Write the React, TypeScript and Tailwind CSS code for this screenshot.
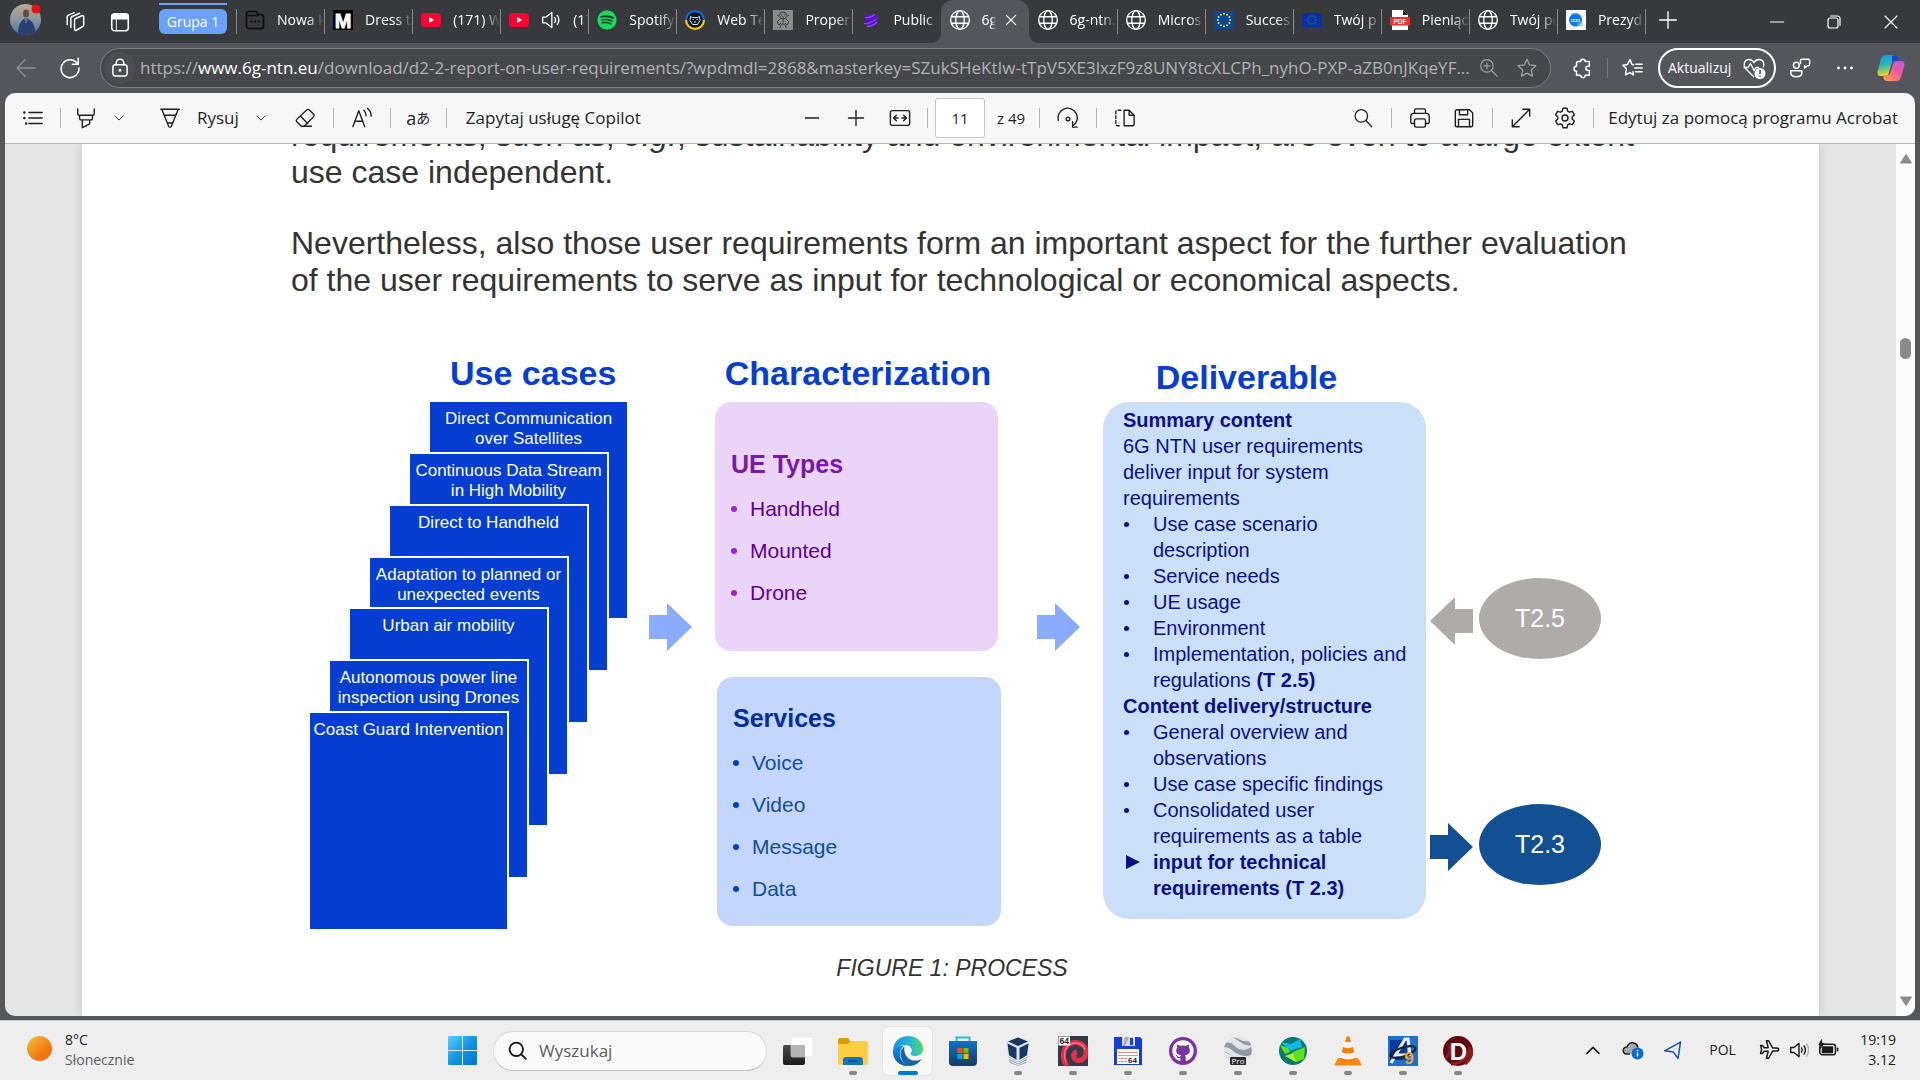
import React from "react";
import type { ReactNode } from "react";
import { FaGithub, FaSpotify } from "react-icons/fa";

const UI = "font-['Open_Sans','Noto_Sans',sans-serif]";
const ARIAL = "font-['Liberation_Sans',Arial,sans-serif]";

/* ---------- icon helpers ---------- */

function Line({ children, size = "size-6", w = 1.25 }: { children: ReactNode; size?: string; w?: number }) {
  return (
    <svg viewBox="0 0 24 24" className={`${size} shrink-0`} fill="none" stroke="currentColor" strokeWidth={w} strokeLinecap="round" strokeLinejoin="round" aria-hidden="true">
      {children}
    </svg>
  );
}

function Art({ children, size = "size-5", box = "0 0 20 20" }: { children: ReactNode; size?: string; box?: string }) {
  return (
    <svg viewBox={box} className={`${size} shrink-0`} aria-hidden="true">
      {children}
    </svg>
  );
}

const Globe = () => (
  <Line size="size-[22px]" w={1.5}>
    <circle cx="12" cy="12" r="10.2" />
    <ellipse cx="12" cy="12" rx="4.6" ry="10.2" />
    <path d="M2.800 8.500h18.400M2.800 15.500h18.400" />
  </Line>
);

const YouTube = () => (
  <Art>
    <rect x="0" y="3" width="20" height="14" rx="3.5" fill="#ff0033" />
    <path d="M8 7l5.2 3L8 13z" fill="#fff" />
  </Art>
);

const Chevron = () => (
  <Line size="size-[10px]" w={2.2}>
    <path d="M2 7l10 10L22 7" />
  </Line>
);

const euStars = Array.from({ length: 12 }, (_, i) => ({
  x: 10 + 6.2 * Math.sin((i * Math.PI) / 6),
  y: 10 - 6.2 * Math.cos((i * Math.PI) / 6),
}));

/* ---------- tab strip ---------- */

type Tab = { label: string; icon: ReactNode; extra?: ReactNode; active?: boolean };

const tabs: Tab[] = [
  {
    label: "Nowa k",
    icon: (
      <Art>
        <path d="M4 1.500h7l2.500 3H16a2.500 2.500 0 012.500 2.500v9a2.500 2.500 0 01-2.500 2.500H4A2.500 2.500 0 011.500 16V4A2.500 2.500 0 014 1.500z" fill="none" stroke="#0c0c0d" strokeWidth="1.700" />
        <path d="M2 5.500h12" stroke="#0c0c0d" strokeWidth="1.500" />
        <path d="M5.500 11.500h1.800M9.200 11.500H11M12.900 11.500h1.800" stroke="#0c0c0d" strokeWidth="1.800" />
      </Art>
    ),
  },
  {
    label: "Dress th",
    icon: (
      <Art>
        <rect width="20" height="20" fill="#000" />
        <text x="10" y="17.500" fontSize="20" fontWeight="900" textAnchor="middle" fill="#fff" stroke="#fff" strokeWidth=".8" fontFamily="Liberation Sans">M</text>
      </Art>
    ),
  },
  { label: "(171) W", icon: <YouTube /> },
  {
    label: "(17",
    icon: <YouTube />,
    extra: (
      <Line size="size-5" w={1.6}>
        <path d="M2 8.500h4L13 3v18l-7-5.500H2zM16.500 9c1.300 2 1.300 4 0 6M19.500 6.500c2.600 3.500 2.600 7.500 0 11" />
      </Line>
    ),
  },
  { label: "Spotify", icon: <FaSpotify className="size-5 shrink-0 rounded-full bg-[#1b3b25] text-[#1ed760]" /> },
  {
    label: "Web Te",
    icon: (
      <Art>
        <circle cx="10" cy="10" r="10" fill="#1668d8" />
        <path d="M0 10a10 10 0 0020 0z" fill="#f7c80a" />
        <circle cx="10" cy="10" r="7.800" fill="#0a1526" />
        <path d="M5.500 6.500l2 1h5l2-1 .5 4-2.500 4h-5L5 10.500z" fill="none" stroke="#dce6f2" strokeWidth="1" />
        <path d="M7.500 9.500h1M11.500 9.500h1M9 12h2" stroke="#dce6f2" strokeWidth="1" />
      </Art>
    ),
  },
  {
    label: "Proper",
    icon: (
      <Art>
        <rect width="20" height="20" fill="#8b8b8b" />
        <g fill="none" stroke="#3c3c3c" strokeWidth="1">
          <circle cx="10" cy="5.500" r="3.500" />
          <path d="M8 5h1M11 5h1M10 6v7M7 9l-3 3 2 3 2-2M13 9l3 3-2 3-2-2M7 18c0-3 1-4 3-4s3 1 3 4M4 5l2 1M16 5l-2 1" />
        </g>
      </Art>
    ),
  },
  {
    label: "Public",
    icon: (
      <Art>
        <ellipse cx="10.500" cy="10" rx="6.500" ry="6" fill="#5213e0" />
        <path d="M4 7.500c4 1 7-1 10-3.200M3 13.500c5 1 9-2 13-5.500M6 16.500c4 0 7-1.500 10-4.500" stroke="#b03bf5" strokeWidth="1.300" fill="none" />
        <path d="M1 12c6 1 12-2 17-6" stroke="#38393d" strokeWidth=".9" fill="none" />
      </Art>
    ),
  },
  { label: "6g", icon: <Globe />, active: true },
  { label: "6g-ntn.", icon: <Globe /> },
  { label: "Micros", icon: <Globe /> },
  {
    label: "Succes",
    icon: (
      <Art>
        <rect width="20" height="18" y="1" fill="#0b4596" />
        {euStars.map((s, i) => (
          <circle key={i} cx={s.x} cy={s.y} r="1" fill="#f5e623" />
        ))}
      </Art>
    ),
  },
  {
    label: "Twój p",
    icon: (
      <Art>
        <rect width="20" height="14" y="3" fill="#0832a0" />
        <circle cx="10" cy="10" r="4" fill="none" stroke="#6b7f68" strokeWidth="1" strokeDasharray="1 1.100" />
      </Art>
    ),
  },
  {
    label: "Pieniąd",
    icon: (
      <Art>
        <path d="M2 0h11l5 5v15H2z" fill="#fff" />
        <path d="M13 0l5 5h-5z" fill="#222" />
        <rect y="7" width="20" height="8.500" rx="1" fill="#f0302c" />
        <text x="10" y="13.500" fontSize="6.500" fontWeight="700" textAnchor="middle" fill="#fff" fontFamily="Liberation Sans">PDF</text>
      </Art>
    ),
  },
  { label: "Twój po", icon: <Globe /> },
  {
    label: "Prezyd",
    icon: (
      <Art>
        <rect width="20" height="20" fill="#fff" />
        <circle cx="9.500" cy="10" r="6.500" fill="#1273e6" />
        <path d="M5 10.500h9" stroke="#fff" strokeWidth="2.600" />
        <path d="M5.500 10.500h8" stroke="#1273e6" strokeWidth="1.400" strokeDasharray="2 .8" />
        <path d="M5 4.500c4-3 9-1 11 3M11 14l5-2v4z" stroke="#6eb0fb" fill="none" />
      </Art>
    ),
  },
];

function TabStrip() {
  return (
    <header className="flex h-[43px] shrink-0 items-stretch bg-[#38393d] text-white">
      <div className="flex items-center pl-[10px]">
        <button aria-label="Profil" className="mb-1 flex size-[31px] items-center">
          <svg viewBox="0 0 31 31" className="size-[31px] overflow-visible" aria-hidden="true">
            <defs>
              <linearGradient id="sky" x1="0" y1="0" x2="0" y2="1">
                <stop offset="0" stopColor="#b5aa8c" />
                <stop offset=".5" stopColor="#8a97a0" />
                <stop offset="1" stopColor="#4577a8" />
              </linearGradient>
              <clipPath id="round"><circle cx="15.500" cy="15.500" r="15.500" /></clipPath>
            </defs>
            <g clipPath="url(#round)">
              <rect width="31" height="31" fill="url(#sky)" />
              <ellipse cx="16" cy="9.500" rx="3" ry="4" fill="#6d4b40" />
              <path d="M8 31c0-9 2-15 8-17 6 2 9 7 10 17z" fill="#2c3f70" />
              <path d="M14 14l2 7 2-7z" fill="#5673a8" />
            </g>
            <circle cx="26" cy="5" r="4.500" fill="#e81010" />
          </svg>
        </button>
        <button aria-label="Obszary robocze" className="ml-5 flex w-7 justify-center">
          <Line size="size-[22px]" w={1.6}>
            <path d="M12 8.500l7.500-3.300c1.200-.5 2 .2 2 1.300v8.500c0 1-.4 1.600-1.300 2L13.500 21c-1.200.5-2-.2-2-1.300V9.500zM7.500 18V8c0-1 .4-1.600 1.300-2L17 2.500M3.500 15V6.500c0-1 .4-1.600 1.300-2L11 1.700" />
          </Line>
        </button>
        <button aria-label="Menu akcji kart" className="ml-[17px] flex w-7 justify-center">
          <Line size="size-[22px]" w={1.700}>
            <rect x="3" y="3" width="18" height="18.500" rx="3" />
            <path d="M3.500 4h17v4.500h-17z" fill="currentColor" />
            <path d="M8 9v12" strokeWidth="1" />
          </Line>
        </button>
      </div>
      <div className="ml-[25px] flex w-[68px] flex-col pt-[3px]">
        <div className="h-[2px] bg-[#6ba1f9]" />
        <button className="mt-1 flex h-[25px] items-center justify-center rounded-md bg-[#6ba1f9] text-sm">Grupa 1</button>
      </div>
      <nav className="ml-[9px] flex min-w-0 flex-[0_1_1410px] items-stretch" aria-label="Karty">
        {tabs.map((t, i) => {
          const noSep = t.active || tabs[i - 1]?.active;
          return (
            <div key={i} className={`flex min-w-0 flex-1 items-stretch ${t.active ? "relative rounded-t-xl bg-[#55565c]" : ""}`}>
              {t.active && (
                <>
                  <span className="absolute -left-[10px] bottom-0 size-[10px] bg-[radial-gradient(circle_at_0_0,#38393d_10px,#55565c_10px)]" />
                  <span className="absolute -right-[10px] bottom-0 size-[10px] bg-[radial-gradient(circle_at_100%_0,#38393d_10px,#55565c_10px)]" />
                </>
              )}
              <span className={`my-[9px] w-px shrink-0 self-stretch ${noSep ? "" : "bg-[#8a8b8f]"}`} />
              <button className="flex min-w-0 flex-1 items-center overflow-hidden pl-2 text-sm">
                <span className="mb-1 flex w-5 shrink-0 justify-center">{t.icon}</span>
                {t.extra && <span className="mb-1 ml-3 flex w-5 shrink-0">{t.extra}</span>}
                <span className={`mb-1 ml-3 min-w-0 overflow-hidden whitespace-nowrap text-left [mask-image:linear-gradient(to_right,black_65%,transparent)] ${t.active ? "w-[14px]" : "flex-1"}`}>
                  {t.label}
                </span>
              </button>
              {t.active && (
                <button aria-label="Zamknij kartę" className="mb-1 flex w-8 shrink-0 items-center justify-center pr-1">
                  <Line size="size-[14px]" w={2}><path d="M4 4l16 16M20 4L4 20" /></Line>
                </button>
              )}
            </div>
          );
        })}
        <span className="my-[9px] w-px shrink-0 bg-[#8a8b8f]" />
      </nav>
      <button aria-label="Nowa karta" className="mb-1 flex w-11 items-center justify-center">
        <Line size="size-5" w={1.600}><path d="M12 2v20M2 12h20" /></Line>
      </button>
      <div className="ml-auto flex">
        <button aria-label="Minimalizuj" className="flex w-[57px] items-center justify-center"><Line size="size-4" w={1.600}><path d="M2 12h20" /></Line></button>
        <button aria-label="Przywróć" className="flex w-[57px] items-center justify-center">
          <Line size="size-4" w={1.800}><rect x="3" y="6" width="15" height="15" rx="3" /><path d="M7 3h10a4 4 0 014 4v10" /></Line>
        </button>
        <button aria-label="Zamknij" className="flex w-[58px] items-center justify-center"><Line size="size-4" w={1.600}><path d="M3 3l18 18M21 3L3 21" /></Line></button>
      </div>
    </header>
  );
}

/* ---------- address bar ---------- */

function AddressBar() {
  return (
    <div className="flex h-[50px] shrink-0 items-center pl-1 pr-[5px] text-white">
      <button aria-label="Wstecz" className="flex w-11 justify-center text-[#8f9095]">
        <Line size="size-[22px]" w={1.400}><path d="M22 12H2.500M11 3l-8.800 9L11 21" /></Line>
      </button>
      <button aria-label="Odśwież" className="flex w-11 justify-center">
        <Line size="size-[22px]" w={1.700}><path d="M20.500 8A9.700 9.700 0 1021.700 12M21 1.500v6.500h-6.500" /></Line>
      </button>
      <div className="ml-2 flex h-10 min-w-0 flex-1 items-center rounded-full border border-[#7b7c80] bg-[#46474b] pl-[3px]">
        <button aria-label="Informacje o witrynie" className="flex size-8 shrink-0 items-center justify-center rounded-full bg-[#4c4d52]">
          <Line size="size-5" w={1.800}>
            <rect x="3.500" y="8" width="17" height="13.500" rx="3" /><path d="M7.500 8V6a4.500 4.500 0 019 0v2" /><circle cx="12" cy="14.700" r=".9" fill="currentColor" />
          </Line>
        </button>
        <div role="textbox" aria-label="Adres" className="ml-1 min-w-0 flex-1 overflow-hidden whitespace-nowrap text-[17px] text-[#b2b2b5]">
          https://<span className="text-white">www.6g-ntn.eu</span>/download/d2-2-report-on-user-requirements/?wpdmdl=2868&amp;masterkey=SZukSHeKtIw-tTpV5XE3lxzF9z8UNY8tcXLCPh_nyhO-PXP-aZB0nJKqeYF...
        </div>
        <button aria-label="Powiększ" className="flex w-9 shrink-0 justify-center text-[#a0a1a5]">
          <Line size="size-5" w={1.400}><circle cx="9.500" cy="9.500" r="7.500" /><path d="M15 15l7 7M9.500 6v7M6 9.500h7" /></Line>
        </button>
        <button aria-label="Dodaj do ulubionych" className="mr-[3px] flex w-10 shrink-0 justify-center text-[#a0a1a5]">
          <Line size="size-[22px]" w={1.400}><path d="M12 2.500l2.900 6.200 6.800.8-5 4.700 1.300 6.700L12 17.600l-6 3.300 1.300-6.700-5-4.700 6.800-.8z" /></Line>
        </button>
      </div>
      <button aria-label="Rozszerzenia" className="ml-[9px] flex w-11 justify-center">
        <Line size="size-[22px]" w={1.600}>
          <path d="M8 5h2.500a2.500 2.500 0 015 0H20v5h-1.500a2.300 2.300 0 000 4.600H20V20h-4.500a2.500 2.500 0 01-5 0H6v-4.500a2.700 2.700 0 010-5.400V7a2 2 0 012-2z" />
        </Line>
      </button>
      <span className="mx-[3px] h-5 w-px bg-[#77787d]" />
      <button aria-label="Ulubione" className="flex w-11 justify-center">
        <Line size="size-[22px]" w={1.600}>
          <path d="M12.500 8.500l-1.500-.3L8.700 2.800 6 8.200l-5 .8 3.800 3.800-1 6.700L8.700 17l3.800 2.500-.5-3.500M15 8h7M14 12h8M15 16h7" />
        </Line>
      </button>
      <button className="ml-[3px] flex h-10 w-[118px] items-center justify-between rounded-full border-2 border-white pl-2 pr-2 text-sm">
        Aktualizuj
        <svg viewBox="0 0 24 24" className="size-6 shrink-0" fill="none" stroke="currentColor" strokeWidth="1.300" aria-hidden="true">
          <path d="M12 21l-8.500-8.500C1 9.500 1.800 3.500 7 3.500c2.200 0 3.800 1 5 3 1.200-2 2.800-3 5-3 4.500 0 6 5 4.200 8M1.500 11.500H6l2.500-4 3.500 7 2-3h3" />
          <circle cx="18" cy="17.500" r="5.500" fill="#fff" stroke="none" />
          <path d="M18 14v4M18 19.500v1.300" stroke="#46474b" strokeWidth="1.500" />
        </svg>
      </button>
      <button aria-label="Czat" className="ml-[2px] flex w-11 justify-center">
        <Line size="size-[22px]" w={1.600}>
          <circle cx="8" cy="9" r="3.200" /><path d="M2 15h12v2.500c0 2.500-2.500 4-6 4s-6-1.500-6-4zM14.500 2.500H21a1.500 1.500 0 011.500 1.500v4A1.500 1.500 0 0121 9.500h-1l-3 2.500V9.500M12.500 7V4a1.500 1.500 0 012-1.500" />
        </Line>
      </button>
      <button aria-label="Ustawienia i więcej" className="ml-px flex w-11 justify-center">
        <Art box="0 0 20 20"><circle cx="3.500" cy="10" r="1.400" fill="#fff" /><circle cx="10" cy="10" r="1.400" fill="#fff" /><circle cx="16.500" cy="10" r="1.400" fill="#fff" /></Art>
      </button>
      <button aria-label="Copilot" className="flex w-12 justify-center">
        <svg viewBox="0 0 28 28" className="size-7" aria-hidden="true">
          <defs>
            <linearGradient id="cpa" x1="0" y1="0" x2=".2" y2="1"><stop offset="0" stopColor="#1d8ff0" /><stop offset=".5" stopColor="#25b9b3" /><stop offset="1" stopColor="#f3d629" /></linearGradient>
            <linearGradient id="cpb" x1="1" y1="0" x2=".2" y2="1"><stop offset="0" stopColor="#b658f0" /><stop offset=".5" stopColor="#ee5a9b" /><stop offset="1" stopColor="#ff9a4a" /></linearGradient>
          </defs>
          <path d="M9 1h9c2 0 3 1 3.500 3L22 7h-4c-2 0-3 1-3.600 3l-2.600 9c-.6 2-2 3-4 3H4c-3 0-4-2-3.300-5L4 5c1-3 2.500-4 5-4z" fill="url(#cpa)" />
          <path d="M18 1c2 0 3 1 3.500 3L22 7h-4c-2 0-3 1-3 2V3c0-1 1-2 3-2z" fill="#1746d1" />
          <path d="M19 27h-9c-2 0-3-1-3.500-3L6 21h4c2 0 3-1 3.600-3l2.600-8c.6-2 2-3 4-3H24c3 0 4 2 3.300 5L24 23c-1 3-2.500 4-5 4z" fill="url(#cpb)" />
        </svg>
      </button>
    </div>
  );
}

/* ---------- PDF toolbar ---------- */

const Sep = ({ className = "" }: { className?: string }) => <span className={`h-5 w-px shrink-0 bg-[#b5b5b5] ${className}`} />;

function Tool({ label, w = "w-11", children }: { label: string; w?: string; children: ReactNode }) {
  return <button aria-label={label} className={`flex h-9 shrink-0 items-center justify-center ${w}`}>{children}</button>;
}

function PdfToolbar() {
  return (
    <div className="flex h-[51px] shrink-0 items-center border-b border-[#b9b9b9] bg-[#f7f7f7] text-[17px] text-[#1f1f1f]">
      <div className="flex flex-1 items-center">
        <Tool label="Spis treści" w="w-[55px]">
          <Line size="size-[22px]" w={1.500}><path d="M7.500 6H22M7.500 12H22M7.500 18H22" /><path d="M2.500 6h.1M2.500 12h.1M4.500 18h.1" strokeWidth="2.600" /></Line>
        </Tool>
        <Sep />
        <Tool label="Wyróżnij" w="w-[50px]">
          <Line size="size-[22px]" w={1.500}><path d="M3 2v5.500a1.500 1.500 0 001.500 1.500h15A1.500 1.500 0 0021 7.500V2M5 9v3.500a1.500 1.500 0 001.500 1.500h11a1.500 1.500 0 001.500-1.500V9M8 14v8.500l8-4V14" /></Line>
        </Tool>
        <Tool label="Kolory wyróżnienia" w="w-4"><Chevron /></Tool>
        <button className="ml-4 flex h-9 items-center">
          <span className="flex w-[54px] justify-center">
            <Line size="size-[22px]" w={1.500}><path d="M2 2.500h20M3 2.500L10.500 21c.6 1.300 2.400 1.300 3 0L21 2.500M6 9h12M9.500 17.500h5" /></Line>
          </span>
          Rysuj
        </button>
        <Tool label="Opcje rysowania"><Chevron /></Tool>
        <Tool label="Wymaż">
          <Line size="size-[22px]" w={1.500}><path d="M13.500 3.500l-10.500 10a1.800 1.800 0 000 2.500l5 5h3l10.500-10.500a1.800 1.800 0 000-2.500l-5-5a2 2 0 00-3 .5zM7 10l8 8M8 21h11" /></Line>
        </Tool>
        <Sep className="ml-[6px]" />
        <Tool label="Czytaj na głos" w="w-14">
          <Line size="size-[22px]" w={1.500}><path d="M2 21.500L8.500 4 15 21.500M4.500 15.500h8M14 3.500c1.600 1.500 2.500 3.500 2.500 6M18 1.500c2.600 2 4 5 4 8.500" /></Line>
        </Tool>
        <Sep />
        <button aria-label="Przetłumacz" className="flex w-[55px] items-center justify-center font-['Open_Sans','Noto_Sans_CJK_JP',sans-serif] leading-6">
          <span className="text-lg leading-6">a</span><span className="text-sm leading-6">あ</span>
        </button>
        <Sep />
        <button className="pl-[19px]">Zapytaj usługę Copilot</button>
      </div>
      <div className="flex items-center pl-10">
        <Tool label="Pomniejsz"><Line size="size-5" w={1.600}><path d="M4 12h16" /></Line></Tool>
        <Tool label="Powiększ"><Line size="size-5" w={1.600}><path d="M12 3v18M3 12h18" /></Line></Tool>
        <Tool label="Dopasuj do szerokości">
          <Line size="size-[22px]" w={1.500}><rect x="1.500" y="4" width="21" height="16" rx="2" /><path d="M8 9l-3 3 3 3M5 12h5M16 9l3 3-3 3M19 12h-5" /></Line>
        </Tool>
        <Sep className="ml-[5px]" />
        <input aria-label="Numer strony" defaultValue="11" className="ml-[7px] h-10 w-[50px] rounded-[3px] border border-[#c6c6c6] bg-white text-center text-[15px]" />
        <span className="ml-3 w-[42px] text-[15px]">z 49</span>
        <Sep />
        <Tool label="Obróć" w="w-14">
          <Line size="size-[22px]" w={1.500}><path d="M1.500 14.500a10.500 10.500 0 1116 6M17 16v6h5" /><circle cx="12" cy="13" r="2" /></Line>
        </Tool>
        <Sep />
        <Tool label="Widok strony" w="w-14">
          <Line size="size-[22px]" w={1.500}><path d="M11 3.500v17h9a2 2 0 002-2V9l-5.500-5.500zM16.500 3.500V9H22" /><path d="M7.500 3.500H4a2 2 0 00-2 2v13a2 2 0 002 2h3.500" strokeDasharray="3 2.200" /></Line>
        </Tool>
      </div>
      <div className="flex flex-1 items-center justify-end pr-[17px]">
        <Tool label="Znajdź"><Line size="size-5" w={1.500}><circle cx="10" cy="9.500" r="7.500" /><path d="M15.500 15l7 7.500" /></Line></Tool>
        <Sep className="mx-[6px]" />
        <Tool label="Drukuj">
          <Line size="size-[22px]" w={1.500}><path d="M6 7V3.500A1.500 1.500 0 017.500 2h9A1.500 1.500 0 0118 3.500V7M6 18H3.500A1.500 1.500 0 012 16.500V10a3 3 0 013-3h14a3 3 0 013 3v6.500a1.500 1.500 0 01-1.500 1.500H18" /><rect x="6" y="13" width="12" height="9" rx="2" /></Line>
        </Tool>
        <Tool label="Zapisz">
          <Line size="size-[22px]" w={1.500}><path d="M4.500 3H18l3.500 3.500v13a2 2 0 01-2 2h-15a2 2 0 01-2-2V5a2 2 0 012-2zM7 3v5.500h9V3M6 21.500v-8h12v8" /></Line>
        </Tool>
        <Sep className="mx-[6px]" />
        <Tool label="Pełny ekran"><Line size="size-[22px]" w={1.500}><path d="M2.500 21.500l19-19M14 2.500h7.500V10M2.500 14v7.500H10" /></Line></Tool>
        <Tool label="Ustawienia">
          <Line size="size-6" w={1.400}>
            <path d="M10 2.200h4l.7 3 1.700 1 3-.9 2 3.500-2.200 2.200v2l2.200 2.200-2 3.500-3-.9-1.700 1-.7 3h-4l-.7-3-1.700-1-3 .9-2-3.500L4.800 13v-2L2.600 8.800l2-3.500 3 .9 1.700-1z" /><circle cx="12" cy="12" r="3" />
          </Line>
        </Tool>
        <Sep className="ml-[6px]" />
        <button className="ml-[14px] whitespace-nowrap">Edytuj za pomocą programu Acrobat</button>
      </div>
    </div>
  );
}

/* ---------- document ---------- */

const layers = [
  { text: "Direct Communication over Satellites", pos: "left-[120px] top-0" },
  { text: "Continuous Data Stream in High Mobility", pos: "left-[100px] top-[52px]" },
  { text: "Direct to Handheld", pos: "left-[80px] top-[104px]" },
  { text: "Adaptation to planned or unexpected events", pos: "left-[60px] top-[156px]" },
  { text: "Urban air mobility", pos: "left-[40px] top-[207px]" },
  { text: "Autonomous power line inspection using Drones", pos: "left-[20px] top-[259px]" },
  { text: "Coast Guard Intervention", pos: "left-0 top-[311px]" },
];

function Arrow({ color, className = "", flip = false }: { color: string; className?: string; flip?: boolean }) {
  return (
    <svg viewBox="0 0 43 48" className={`h-12 w-[43px] shrink-0 ${flip ? "-scale-x-100" : ""} ${className}`} aria-hidden="true">
      <path d="M0 12h18V0l25 24-25 24V36H0z" fill={color} />
    </svg>
  );
}

function Card({ title, items, tone }: { title: string; items: string[]; tone: { card: string; title: string; item: string; dot: string } }) {
  return (
    <section className={`flex h-[249px] flex-col rounded-2xl px-4 ${tone.card}`}>
      <h3 className={`text-[25px] leading-[30px] font-bold ${tone.title}`}>{title}</h3>
      <ul className={`mt-[9px] text-[21px] leading-[42px] ${tone.item}`}>
        {items.map((it) => (
          <li key={it} className="flex items-center">
            <span className={`mr-[13px] size-[6px] rounded-full ${tone.dot}`} />
            {it}
          </li>
        ))}
      </ul>
    </section>
  );
}

function Bullets({ items }: { items: ReactNode[] }) {
  return (
    <ul>
      {items.map((it, i) => (
        <li key={i} className="flex">
          <span className="flex h-[26px] w-[30px] shrink-0 items-center pl-px"><span className="size-[5px] rounded-full bg-current" /></span>
          <span>{it}</span>
        </li>
      ))}
    </ul>
  );
}

function Figure() {
  return (
    <figure className="mt-[51px]">
      <div className="flex text-[#053ed0]">
        <div className="w-[336px] shrink-0 pl-[19px] pt-1">
          <h2 className="h-[46px] pl-[140px] text-[34px] leading-[38px] font-bold whitespace-nowrap">Use cases</h2>
          <div className="relative h-[530px]">
            {layers.map((l) => (
              <div key={l.text} className={`absolute h-[218px] w-[199px] border-t-2 border-r-2 border-white bg-[#053ed0] pt-[7px] text-center text-[17px] leading-5 text-white ${l.pos}`}>
                {l.text}
              </div>
            ))}
          </div>
        </div>
        <Arrow color="#8aabff" className="mt-[253px] ml-[22px]" />
        <div className="ml-[23px] w-[286px] shrink-0 pt-1">
          <h2 className="h-12 text-center text-[34px] leading-[38px] font-bold">Characterization</h2>
          <div className="mr-[3px] [&>section]:pt-[47px]">
            <Card title="UE Types" items={["Handheld", "Mounted", "Drone"]} tone={{ card: "bg-[#ead5f8]", title: "text-[#7719aa]", item: "text-[#5c0096]", dot: "bg-[#9a22dd]" }} />
          </div>
          <div className="mt-[26px] ml-[2px] [&>section]:pt-[26px]">
            <Card title="Services" items={["Voice", "Video", "Message", "Data"]} tone={{ card: "bg-[#c4d5fe]", title: "text-[#002f9c]", item: "text-[#134f93]", dot: "bg-[#053ed0]" }} />
          </div>
        </div>
        <Arrow color="#8aabff" className="mt-[253px] ml-9" />
        <div className="ml-[23px] w-[323px] shrink-0 pt-2">
          <h2 className="h-11 pr-9 text-center text-[34px] leading-[38px] font-bold">Deliverable</h2>
          <div className="h-[517px] rounded-[26px] bg-[#cbdff8] pt-[5px] pr-4 pl-5 text-[20px] leading-[26px] text-[#0a1188]">
            <h3 className="font-bold">Summary content</h3>
            <p>6G NTN user requirements deliver input for system requirements</p>
            <Bullets items={["Use case scenario description", "Service needs", "UE usage", "Environment", <>Implementation, policies and regulations <b>(T 2.5)</b></>]} />
            <h3 className="font-bold">Content delivery/structure</h3>
            <Bullets items={["General overview and observations", "Use case specific findings", "Consolidated user requirements as a table"]} />
            <p className="flex font-bold">
              <span className="flex h-[26px] w-[30px] shrink-0 items-center pl-[3px]">
                <svg viewBox="0 0 14 14" className="size-[14px]" aria-hidden="true"><path d="M0 0l14 7-14 7z" fill="currentColor" /></svg>
              </span>
              <span>input for technical requirements (T 2.3)</span>
            </p>
          </div>
        </div>
        <div className="ml-1 flex shrink-0 flex-col gap-[145px] pt-[228px] text-[25px] text-white">
          <div className="flex items-center gap-[6px]">
            <Arrow color="#afabab" flip className="mt-1" />
            <span className="flex h-[81px] w-[122px] items-center justify-center rounded-[50%] bg-[#afabab]">T2.5</span>
          </div>
          <div className="flex items-center gap-[6px]">
            <Arrow color="#134f93" className="mt-1" />
            <span className="flex h-[81px] w-[122px] items-center justify-center rounded-[50%] bg-[#134f93]">T2.3</span>
          </div>
        </div>
      </div>
      <figcaption className="mt-[23px] text-center text-[23px] leading-[30px] italic">FIGURE 1: PROCESS</figcaption>
    </figure>
  );
}

function Viewer() {
  return (
    <main className="flex min-h-0 flex-1 bg-[#e6e6e6]">
      <div className="min-w-0 flex-1 overflow-hidden px-[77px]">
        <article className={`flex h-full justify-center bg-white pl-[3px] text-[#333] shadow-[0_0_12px_rgba(0,0,0,0.14)] ${ARIAL}`}>
          <div className="-mt-[27px] w-[1322px] shrink-0">
            <div className="-mr-6 text-[32px] leading-[37px]">
              <p>
                requirements, such as, <i>e.g.</i>, sustainability and environmental impact, are even to a large extent
                <br />
                use case independent.
              </p>
              <p className="mt-[34px]">
                Nevertheless, also those user requirements form an important aspect for the further evaluation
                <br />
                of the user requirements to serve as input for technological or economical aspects.
              </p>
            </div>
            <Figure />
          </div>
        </article>
      </div>
      <div className="flex w-[19px] shrink-0 flex-col items-center bg-[#fcfcfc] py-[9px] text-[#8a8a8a]">
        <Art size="size-3" box="0 0 12 12"><path d="M6 1.500L11.500 10H.5z" fill="currentColor" stroke="currentColor" strokeLinejoin="round" /></Art>
        <div className="mt-[173px] h-[21px] w-[11px] rounded-full bg-[#8a8a8a]" />
        <div className="mt-auto flex"><Art size="size-3" box="0 0 12 12"><path d="M6 10.500L11.500 2H.5z" fill="currentColor" stroke="currentColor" strokeLinejoin="round" /></Art></div>
      </div>
    </main>
  );
}

/* ---------- taskbar ---------- */

const apps: { name: string; icon: ReactNode; running?: boolean; active?: boolean }[] = [
  {
    name: "Widok zadań",
    icon: (
      <>
        <defs><linearGradient id="tv" x1="0" y1="0" x2="0" y2="1"><stop offset="0" stopColor="#4a4a4a" /><stop offset="1" stopColor="#1c1c1c" /></linearGradient></defs>
        <rect x="0" y="9" width="22" height="20" rx="2" fill="url(#tv)" />
        <rect x="8" y="1" width="22" height="20" rx="2" fill="#fff" stroke="#ddd" strokeWidth=".7" />
        <path d="M8 9h14v12H10a2 2 0 01-2-2z" fill="#b4b4b4" />
      </>
    ),
  },
  {
    name: "Eksplorator plików",
    running: true,
    icon: (
      <>
        <path d="M0 4a2 2 0 012-2h8l3 4v6H0z" fill="#d99c05" />
        <path d="M0 8h10l3-3h15a2 2 0 012 2v20a2 2 0 01-2 2H2a2 2 0 01-2-2z" fill="#ffce42" />
        <path d="M5 29v-5a3 3 0 013-3h14a3 3 0 013 3v5z" fill="#1673c4" />
        <path d="M10 25h10" stroke="#0c4a86" strokeWidth="1.500" />
      </>
    ),
  },
  {
    name: "Microsoft Edge",
    running: true,
    active: true,
    icon: (
      <>
        <defs>
          <linearGradient id="eg" x1="0" y1=".5" x2="1" y2=".4"><stop offset="0" stopColor="#1c8fe0" /><stop offset=".6" stopColor="#28b8d6" /><stop offset="1" stopColor="#55da58" /></linearGradient>
          <linearGradient id="eh" x1="0" y1="0" x2="0" y2="1"><stop offset="0" stopColor="#1391e8" /><stop offset="1" stopColor="#0c59a4" /></linearGradient>
        </defs>
        <path d="M0 14C1 5 7 0 15 0c9 0 15 6 15 13 0 5-4 7-8 7-3 0-5-1-4-3 2-3 0-8-6-8-5 0-9 2-12 5z" fill="url(#eg)" />
        <path d="M0 14c3-4 7-5 11-4-3 2-4 5-4 8 0 6 4 10 9 12C7 31-1 24 0 14z" fill="url(#eh)" />
        <path d="M11.500 10.500C8 13 7 17 8 21c1 5 5 9 9 9 5 0 9-3 11.500-7-4 2-9 2-12 0-4-2-6-8-5-12.500z" fill="#1565ad" />
      </>
    ),
  },
  {
    name: "Microsoft Store",
    icon: (
      <>
        <defs><linearGradient id="st" x1="0" y1="0" x2="0" y2="1"><stop offset="0" stopColor="#0f73c4" /><stop offset="1" stopColor="#173a66" /></linearGradient></defs>
        <path d="M8.500 7V1.500h13V7" fill="none" stroke="#35b5ee" strokeWidth="2" />
        <path d="M1 5h28v21a4 4 0 01-4 4H5a4 4 0 01-4-4z" fill="url(#st)" />
        <rect x="9.500" y="12" width="5" height="5" fill="#f25022" /><rect x="15.500" y="12" width="5" height="5" fill="#7fba00" />
        <rect x="9.500" y="18" width="5" height="5" fill="#00a4ef" /><rect x="15.500" y="18" width="5" height="5" fill="#ffb900" />
      </>
    ),
  },
  {
    name: "VirtualBox",
    running: true,
    icon: (
      <>
        <path d="M5 18l2 9 8 3 8-3 2-9z" fill="#9da8b8" />
        <path d="M6 22l9 5 9-5M7 25l8 4 8-4" stroke="#e8ebf0" fill="none" />
        <path d="M15 0l12 5-1.500 15L15 26 4.500 20 3 5z" fill="#dfe5ee" />
        <path d="M15 1.500L25 5.500 15 10 5 5.500zM4.500 7.500l9 4.200v12L6 19.300zM25.500 7.500l-9 4.200v12l7.500-4.400z" fill="#18375f" />
      </>
    ),
  },
  {
    name: "Delphi",
    running: true,
    icon: (
      <>
        <rect width="30" height="30" fill="#343b48" />
        <path d="M9.500 30C4 24 4 14 10 9c7-5 17-2 18 6 .5 7-5 11-9.500 9-4-2-4-7 .5-8" fill="none" stroke="#e92c4a" strokeWidth="5" />
        <path d="M8 26C5 19 7 11 12 8.500c6-3 13-1 15 5" fill="none" stroke="#ff8c9a" strokeWidth="1.100" />
        <rect x=".5" y=".5" width="11.500" height="9" fill="#fff" />
        <text x="6.200" y="8" fontSize="8.500" fontWeight="700" textAnchor="middle" fill="#222" fontFamily="Liberation Sans">64</text>
      </>
    ),
  },
  {
    name: "Total Commander",
    running: true,
    icon: (
      <>
        <path d="M1 1h26l2 2v26H1z" fill="#1540cf" />
        <rect x="9" y="1" width="13" height="9" fill="#d9d9d9" /><path d="M12 1l4 0-4 9h-2z" fill="#aaa" /><rect x="17" y="2" width="3" height="7" fill="#1540cf" />
        <rect x="4" y="13" width="22" height="15" fill="#fff" />
        <path d="M5 16.500h20M5 19.500h20M5 22.500h9M5 25.500h9" stroke="#eb8a8a" strokeWidth="1" />
        <text x="19.500" y="27" fontSize="8" fontWeight="700" textAnchor="middle" fill="#222" fontFamily="Liberation Sans">64</text>
      </>
    ),
  },
  { name: "GitHub Desktop", running: true, icon: <><circle cx="15" cy="15" r="14" fill="#7b33a5" /><FaGithub x={4} y={4} width={22} height={22} size={22} color="#fff" /></> },
  {
    name: "Google Earth Pro",
    running: true,
    icon: (
      <>
        <circle cx="15" cy="14.500" r="14" fill="#e2e4e8" />
        <path d="M3 7c6-2 8 4 13 6 4 1.500 8 1 12-2 1 3 1 5 0 8-5 2-10 1-15-2-4-3-7-6-12-6zM10 1.500c5 0 7 4 16 4 1 1 2 3 2 4-8 1-11-5-18-8zM1 16c6 0 9 6 16 7" fill="#8f99a9" />
        <rect x="7" y="21" width="16" height="8" rx="1" fill="#2a2a2a" />
        <text x="15" y="27.500" fontSize="8" textAnchor="middle" fill="#fff" fontFamily="Open Sans">Pro</text>
      </>
    ),
  },
  {
    name: "NetBeans",
    running: true,
    icon: (
      <>
        <circle cx="15" cy="15" r="14" fill="#0a7a70" />
        <path d="M3 6l10 2 9-5 2 8-12 4z" fill="#12b9e8" />
        <path d="M2 9l8 3 2 4-5 2zM15 16l12-5-1 12-8 3-6-4z" fill="#5fe01a" />
        <path d="M7 20l8-3 3 9z" fill="#a8f23a" />
      </>
    ),
  },
  {
    name: "VLC",
    running: true,
    icon: (
      <>
        <path d="M5 22h20l4 7.500H1z" fill="#f58a0c" />
        <path d="M13.200 2h3.600l6.700 22c-4 3-13 3-17 0z" fill="#f3f3f3" />
        <path d="M13.200 1.500a2 2 0 013.600 0l1.200 4c-1.500 1-4.500 1-6 0zM10.300 11c2.500 1.500 7 1.500 9.400 0l1.600 5c-3.500 2-9 2-12.600 0zM7.300 21.500c4 2.500 11.400 2.500 15.400 0l1 3c-4 3-13.400 3-17.400 0z" fill="#f0810a" />
      </>
    ),
  },
  {
    name: "Aplikacja A9",
    running: true,
    icon: (
      <>
        <rect width="30" height="30" fill="#1c6ed0" />
        <rect x="2" y="4" width="17" height="20" fill="#083b96" />
        <path d="M3 27L17 3h3l2 17M9 19h9" fill="none" stroke="#e8eef8" strokeWidth="3.200" />
        <ellipse cx="15" cy="16" rx="13" ry="4.500" transform="rotate(-18 15 16)" fill="none" stroke="#1b222e" strokeWidth="2.300" />
        <text x="21" y="28" fontSize="17" fontWeight="700" textAnchor="middle" fill="#f7a024" fontFamily="Liberation Sans">9</text>
      </>
    ),
  },
  {
    name: "Aplikacja D",
    running: true,
    icon: (
      <>
        <circle cx="15" cy="15" r="15" fill="#5e0a10" />
        <path d="M2 22c4-2 6-7 5-14M8 28c10 0 18-6 19-17M22 28c5-4 7-8 7-14" stroke="#8e1a22" strokeWidth="3" fill="none" />
        <text x="15.500" y="23.500" fontSize="24" fontWeight="700" textAnchor="middle" fill="#fff" fontFamily="Liberation Sans">D</text>
      </>
    ),
  },
];

function Taskbar() {
  return (
    <footer className="grid h-[60px] shrink-0 grid-cols-[1fr_auto_1fr] items-center border-t border-[#c4c4c6] bg-[#eeeeee] text-[15px] leading-5 text-[#1b1b1b]">
      <button className="flex items-center gap-[13px] pl-[27px] text-left">
        <svg viewBox="0 0 25 25" className="mb-1 size-[25px]" aria-hidden="true">
          <defs><linearGradient id="sun" x1="0" y1="0" x2=".8" y2="1"><stop offset="0" stopColor="#f0c43a" /><stop offset=".8" stopColor="#f3700f" /></linearGradient></defs>
          <circle cx="12.500" cy="12.500" r="12.500" fill="url(#sun)" />
        </svg>
        <span className="mb-[2px] flex flex-col text-sm leading-5">
          <span>8°C</span>
          <span className="text-[#5f5f5f]">Słonecznie</span>
        </span>
      </button>
      <div className="flex h-full items-center">
        <button aria-label="Start" className="flex w-[55px] justify-center">
          <svg viewBox="0 0 29 29" className="size-[29px]" aria-hidden="true">
            <defs><linearGradient id="win" gradientUnits="userSpaceOnUse" x1="0" y1="0" x2="29" y2="29"><stop offset="0" stopColor="#52d3ff" /><stop offset=".5" stopColor="#1394e2" /><stop offset="1" stopColor="#0474d0" /></linearGradient></defs>
            <path d="M0 1a1 1 0 011-1h13v14H0zM15 0h13a1 1 0 011 1v13H15zM0 15h14v14H1a1 1 0 01-1-1zM15 15h14v13a1 1 0 01-1 1H15z" fill="url(#win)" />
          </svg>
        </button>
        <label className="mr-[3px] ml-[3px] flex h-10 w-[274px] items-center rounded-full border border-[#d9d9d9] border-b-[#c2c2c2] bg-[#fafafa] pl-[14px]">
          <Line size="size-[19px]" w={2.400}><circle cx="10.500" cy="10.500" r="8.500" /><path d="M17 17l5.500 5.500" /></Line>
          <input aria-label="Wyszukaj" placeholder="Wyszukaj" className="ml-3 w-40 bg-transparent text-[17px] outline-none placeholder:text-[#5f5f5f]" />
        </label>
        {apps.map((a) => (
          <button key={a.name} aria-label={a.name} className="flex h-full w-[55px] flex-col items-center justify-center">
            <span className={`flex h-12 w-[49px] flex-col items-center justify-end rounded-md ${a.active ? "bg-[#f8f8f8] shadow-[0_0_1px_1px_#e4e4e4]" : ""}`}>
              <svg viewBox="0 0 30 30" className="size-[30px]" aria-hidden="true">{a.icon}</svg>
              <span className={`mt-[5px] h-1 rounded-full ${a.active ? "w-5 bg-[#0078d4]" : a.running ? "w-2 bg-[#868686]" : "w-2"}`} />
            </span>
          </button>
        ))}
      </div>
      <div className="flex items-center justify-end pr-6 pb-[2px]">
        <button aria-label="Pokaż ukryte ikony" className="flex w-10 justify-center"><Line size="size-4" w={2.400}><path d="M3 17l9-9 9 9" /></Line></button>
        <button aria-label="OneDrive" className="flex w-10 justify-center">
          <svg viewBox="0 0 22 20" className="h-5 w-[22px]" aria-hidden="true">
            <path d="M8 14H4.500C2 14 1 12 1.300 10 1.600 8 3 7 5 7c1-3.500 4-5 7-4 2 .6 3.500 2 4 4.500" fill="#a9a9a9" stroke="#222" strokeWidth="1.400" />
            <circle cx="15.500" cy="13.500" r="6" fill="#0a6bcb" />
            <path d="M15.500 12.500v4M15.500 10v1.200" stroke="#fff" strokeWidth="1.500" />
          </svg>
        </button>
        <button aria-label="Lokalizacja" className="flex w-10 justify-center text-[#1150a8]"><Line size="size-5" w={1.800}><path d="M21 2.500L2 13l10.500 1.500L18 22z" /></Line></button>
        <button className="ml-4 w-[43px] text-left text-sm">POL</button>
        <button aria-label="Sieć, głośność, bateria" className="flex items-center gap-[9px] pl-[7px]">
          <Line size="size-[21px]" w={1.700}><path d="M22.500 12c0-1-1-1.800-2.500-1.800h-4.500L11 2H8.500L10.500 10H6L4 7.500H1.800L3 12l-1.200 4.500H4L6 14h4.500l-2 8H11l4.500-8.200H20c1.500 0 2.500-.8 2.500-1.800z" /></Line>
          <Line size="size-5" w={1.700}><path d="M2 9h4l6-5v16l-6-5H2zM15 9.500c1 1.500 1 3.500 0 5M18 7c2 3 2 7 0 10" /><path d="M21 4.500c3 4.500 3 10.500 0 15" stroke="#b5b5b5" /></Line>
          <Line size="size-[21px]" w={1.700}><rect x="2" y="6" width="18" height="12" rx="3" /><path d="M5.500 9h11v6.500H5z" fill="currentColor" /><path d="M22.500 10.500v3" /><path d="M4 1L1 6.500h3L2.500 11 7 5H4.500z" fill="currentColor" strokeWidth="1" /></Line>
        </button>
        <button className="ml-[21px] flex flex-col items-end text-sm leading-5"><span>19:19</span><span>3.12</span></button>
      </div>
    </footer>
  );
}

export default function App() {
  return (
    <div className={`flex h-screen flex-col overflow-hidden bg-[#55565c] ${UI}`}>
      <TabStrip />
      <AddressBar />
      <div className="mx-[5px] mb-1 flex min-h-0 flex-1 flex-col overflow-hidden rounded-[10px]">
        <PdfToolbar />
        <Viewer />
      </div>
      <Taskbar />
    </div>
  );
}
